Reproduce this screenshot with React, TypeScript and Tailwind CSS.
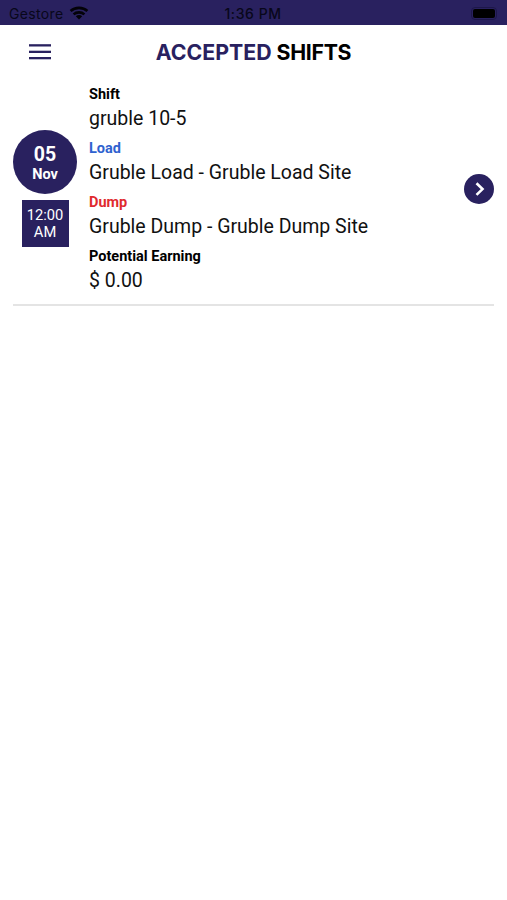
type Field = { label: string; value: string; tone: string };

const fields: Field[] = [
  { label: 'Shift', value: 'gruble 10-5', tone: 'text-black' },
  { label: 'Load', value: 'Gruble Load - Gruble Load Site', tone: 'text-[#2f62cf]' },
  { label: 'Dump', value: 'Gruble Dump - Gruble Dump Site', tone: 'text-[#e02a2e]' },
  { label: 'Potential Earning', value: '$ 0.00', tone: 'text-black' },
];

function StatusBar() {
  return (
    <div className="flex h-[25px] items-center bg-[#29215f] px-[9px] pt-[2px] font-['Inter',sans-serif] text-[14px] text-[#08071a]">
      <div className="flex flex-1 items-center gap-[5px]">
        <span className="tracking-[0.35px]">Gestore</span>
        <svg width="20" height="14" viewBox="0 0 20 14" fill="none" stroke="#030208" strokeWidth="2.6" className="-mt-0.5">
          <path d="M1.6 5C6 .8 14 .8 18.4 5" />
          <path d="M4.6 8.4C7.5 5.7 12.5 5.7 15.4 8.4" />
          <path d="M10 13.4 6.8 10.3C8.6 8.7 11.4 8.7 13.2 10.3Z" fill="#030208" stroke="none" />
        </svg>
      </div>
      <span className="font-medium tracking-[0.55px]">1:36 PM</span>
      <div className="flex flex-1 items-center justify-end pr-px">
        <div className="-mt-px h-[13px] w-[26px] rounded-[4px] border border-[#1d174a] p-px">
          <div className="h-full w-full rounded-[2px] bg-black" />
        </div>
      </div>
    </div>
  );
}

function Header() {
  return (
    <header className="flex h-[54px] items-center px-[29px]">
      <button aria-label="Menu" className="flex w-[22px] items-center">
        <svg width="22" height="16" viewBox="0 0 22 16" fill="#29215f">
          <rect y="0.2" width="22" height="2.3" />
          <rect y="6.7" width="22" height="2.3" />
          <rect y="13" width="22" height="2.3" />
        </svg>
      </button>
      <h1 className="flex-1 pt-[2px] pr-[22px] text-center font-['Inter',sans-serif] text-[21.3px] font-bold whitespace-nowrap text-black">
        <span className="text-[#29215f]">ACCEPTED</span> <span className="tracking-[-0.3px]">SHIFTS</span>
      </h1>
    </header>
  );
}

function ShiftCard() {
  return (
    <section className="mx-[13px] flex h-[227px] border-b-2 border-[#e4e4e4] pt-[3px]">
      <div className="flex w-[64px] flex-col items-center pt-[48px] text-white">
        <div className="flex size-[64px] flex-col items-center justify-center rounded-full bg-[#29215f] pt-[3px] font-bold">
          <span className="text-[19.5px] leading-[21px]">05</span>
          <span className="text-[14.5px] leading-[19px]">Nov</span>
        </div>
        <div className="mt-[6px] flex h-[47px] w-[47px] flex-col justify-center bg-[#29215f] text-center text-[14.7px] leading-[17px]">
          <span>12:00</span>
          <span>AM</span>
        </div>
      </div>
      <div className="ml-[12px] flex-1 whitespace-nowrap">
        {fields.map((f) => (
          <div key={f.label} className="h-[54.2px]">
            <div className={`h-[23px] pt-[0.6px] text-[14.5px] leading-[23px] font-bold ${f.tone}`}>{f.label}</div>
            <div className="h-[26px] pt-[0.9px] text-[19.5px] leading-[26px] text-[#111]">{f.value}</div>
          </div>
        ))}
      </div>
      <button aria-label="Open shift" className="mt-[92px] flex size-[30px] items-center justify-center rounded-full bg-[#29215f]">
        <svg width="30" height="30" viewBox="0 0 30 30" fill="none" stroke="white" strokeWidth="2.6">
          <path d="m12.5 9.3 6 5.8-6 5.8" />
        </svg>
      </button>
    </section>
  );
}

export default function App() {
  return (
    <main className="h-[900px] w-[507px] overflow-hidden bg-white font-['Roboto',sans-serif]">
      <StatusBar />
      <Header />
      <ShiftCard />
    </main>
  );
}
